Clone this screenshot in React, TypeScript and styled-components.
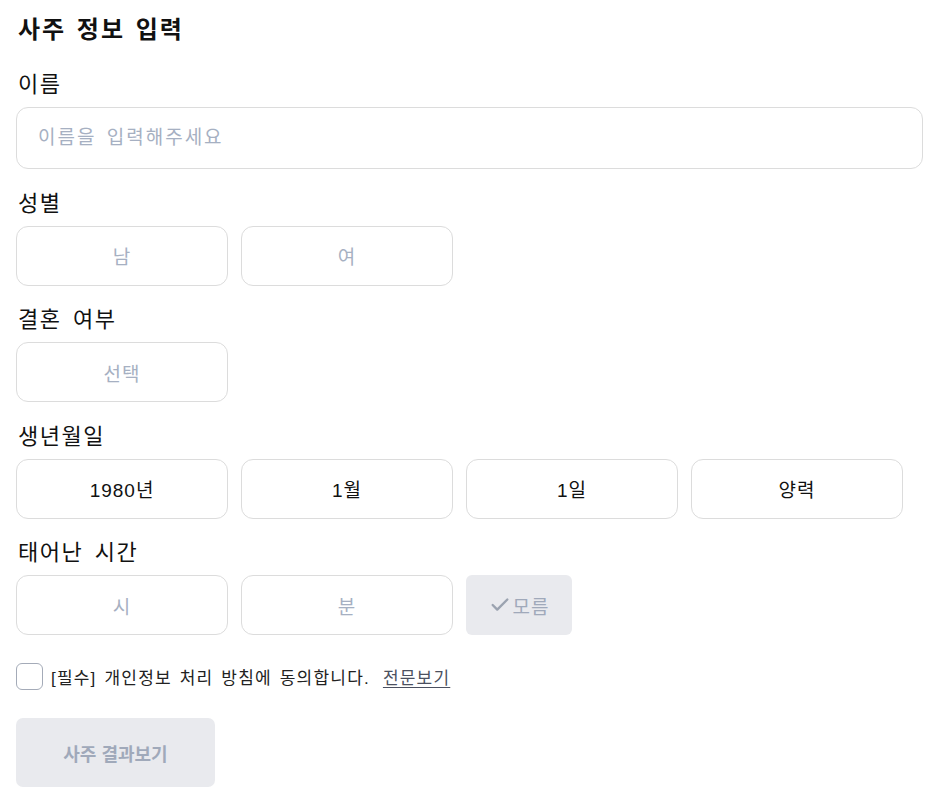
import { Check } from "lucide-react";
import styled, { createGlobalStyle } from "styled-components";

const GlobalStyle = createGlobalStyle`
  body {
    margin: 0;
    background: #ffffff;
    font-family: "Liberation Sans", "Noto Sans CJK KR", sans-serif;
    color: #111111;
  }
`;

const Page = styled.div`
  padding: 14px 18px 16px 16px;
  display: flex;
  flex-direction: column;
`;

const Title = styled.h1`
  margin: 0 0 24px 2px;
  font-size: 24px;
  line-height: 32px;
  font-weight: 700;
  letter-spacing: 2px;
  word-spacing: 2px;
`;

const Section = styled.section`
  display: flex;
  flex-direction: column;
  & + & {
    margin-top: 19.5px;
  }
`;

const Label = styled.div`
  margin: 0 0 7px 2px;
  font-size: 22px;
  line-height: 30px;
  letter-spacing: 1.5px;
  word-spacing: 4px;
`;

const TextInput = styled.input`
  box-sizing: border-box;
  width: 100%;
  height: 62px;
  padding: 0 21px;
  border: 1px solid #dcdcdc;
  border-radius: 12px;
  font-family: inherit;
  font-size: 19px;
  letter-spacing: 2px;
  word-spacing: 3px;
  color: #111;
  outline: none;
  &::placeholder {
    color: #a6b0c2;
  }
`;

const ButtonRow = styled.div`
  display: flex;
  gap: 13px;
`;

const Option = styled.button<{ $filled?: boolean }>`
  box-sizing: border-box;
  width: 212px;
  height: 60px;
  border: 1px solid #dcdcdc;
  border-radius: 12px;
  background: #ffffff;
  font-family: inherit;
  font-size: 19px;
  letter-spacing: 1px;
  color: ${(p) => (p.$filled ? "#111111" : "#a6b0c2")};
  cursor: pointer;
`;

const UnknownToggle = styled.button`
  box-sizing: border-box;
  width: 106px;
  height: 60px;
  padding: 0;
  border: none;
  border-radius: 6px;
  background: #e9eaee;
  font-family: inherit;
  font-size: 19px;
  letter-spacing: 1px;
  color: #a0a9ba;
  display: flex;
  align-items: center;
  justify-content: center;
  gap: 2px;
  svg {
    color: #9ba3b0;
  }
`;

const AgreeRow = styled.label`
  display: flex;
  align-items: center;
  gap: 8px;
  margin-top: 28px;
  font-size: 17px;
  letter-spacing: 1.2px;
  word-spacing: 2px;
  color: #222;
`;

const Box = styled.span`
  box-sizing: border-box;
  width: 27px;
  height: 27px;
  border: 1.5px solid #a4abb8;
  border-radius: 6px;
  background: #fff;
`;

const FullLink = styled.a`
  margin-left: 5px;
  color: #4b5060;
  text-decoration: underline;
  text-underline-offset: 3px;
`;

const Submit = styled.button`
  margin-top: 28px;
  width: 199px;
  height: 69px;
  border: none;
  border-radius: 7px;
  background: #e9eaee;
  font-family: inherit;
  font-size: 18px;
  font-weight: 700;
  color: #a0a9ba;
`;

export default function App() {
  return (
    <>
      <GlobalStyle />
      <Page>
        <Title>사주 정보 입력</Title>

        <Section>
          <Label>이름</Label>
          <TextInput placeholder="이름을 입력해주세요" />
        </Section>

        <Section>
          <Label>성별</Label>
          <ButtonRow>
            <Option>남</Option>
            <Option>여</Option>
          </ButtonRow>
        </Section>

        <Section>
          <Label>결혼 여부</Label>
          <ButtonRow>
            <Option>선택</Option>
          </ButtonRow>
        </Section>

        <Section>
          <Label>생년월일</Label>
          <ButtonRow>
            <Option $filled>1980년</Option>
            <Option $filled>1월</Option>
            <Option $filled>1일</Option>
            <Option $filled>양력</Option>
          </ButtonRow>
        </Section>

        <Section>
          <Label>태어난 시간</Label>
          <ButtonRow>
            <Option>시</Option>
            <Option>분</Option>
            <UnknownToggle>
              <Check size={22} strokeWidth={2.6} />
              모름
            </UnknownToggle>
          </ButtonRow>
        </Section>

        <AgreeRow>
          <Box />
          <span>[필수] 개인정보 처리 방침에 동의합니다.</span>
          <FullLink>전문보기</FullLink>
        </AgreeRow>

        <div>
          <Submit>사주 결과보기</Submit>
        </div>
      </Page>
    </>
  );
}
